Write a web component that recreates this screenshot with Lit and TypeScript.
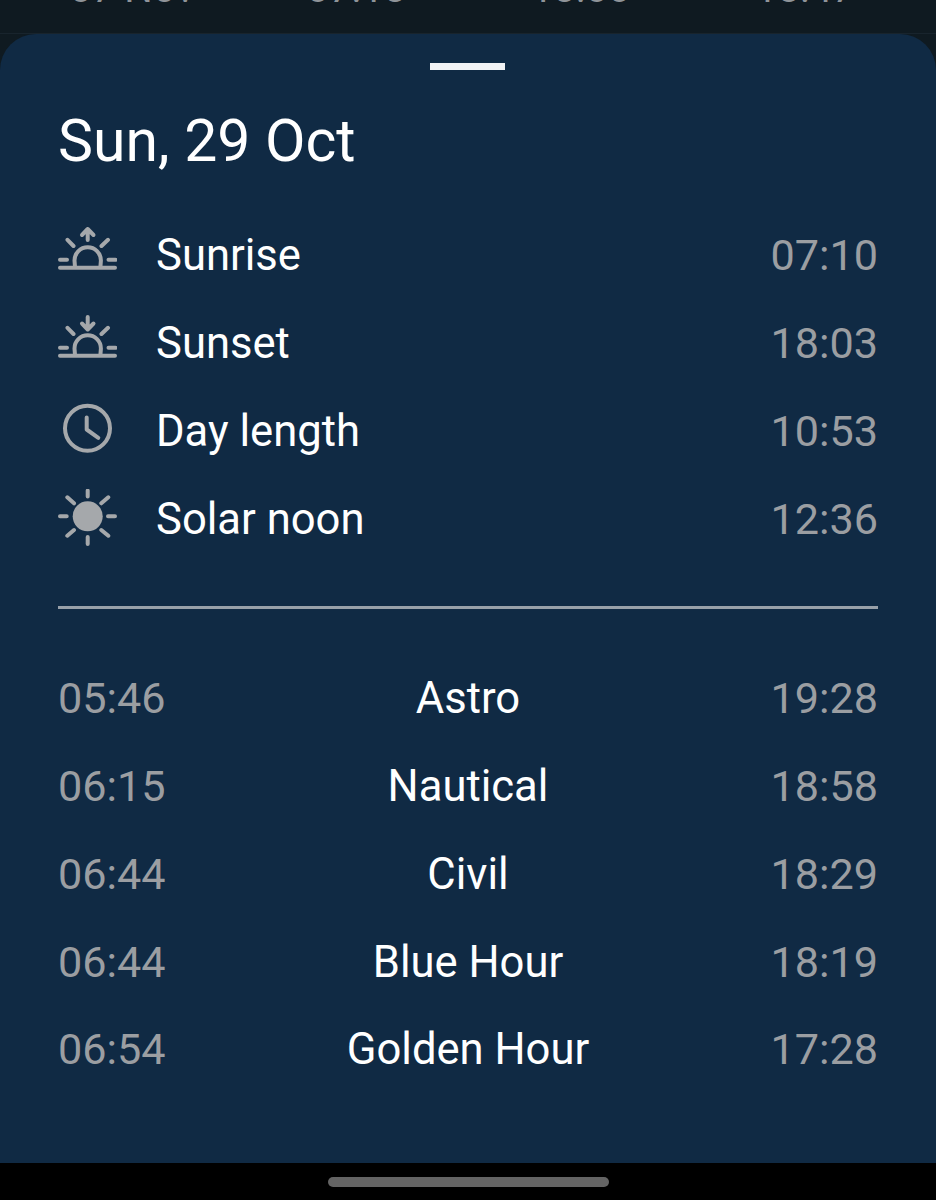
import { LitElement, html, css, svg } from "lit";
import { customElement } from "lit/decorators.js";

const sunBase = svg`<path d="M2 42.800H57M2 34.800H9M50.500 34.800H57.500M9.500 14.800L15.500 21M50 14.800L43.500 21M17 42L16.500 35.500A13.200 13.200 0 0 1 42.900 35.500L42.400 42" />`;
const icons: Record<string, unknown> = {
  rise: svg`${sunBase}<path d="M29.700 15V4M24 10L29.700 4L35.500 10" />`,
  set: svg`${sunBase}<path d="M29.700 4V16M24 10.500L29.700 16.500L35.500 10.500" />`,
  clock: svg`<circle cx="29.500" cy="27.300" r="22.500" /><path d="M28.700 16.500V28.500L40.300 36.800" />`,
  sun: svg`<circle cx="29.700" cy="27.300" r="15" fill="currentColor" stroke="none" /><path d="M29.700 1.600V7.400M29.700 48V55M2 27.300H8.700M50 27.300H57M9.300 8.300L16 14.300M50.300 8.300L43.300 14.300M9.300 46.700L16 41M50.300 46.700L43.300 41" />`,
};

const facts = [
  ["rise", "Sunrise", "07:10"],
  ["set", "Sunset", "18:03"],
  ["clock", "Day length", "10:53"],
  ["sun", "Solar noon", "12:36"],
];
const twilight = [
  ["05:46", "Astro", "19:28"],
  ["06:15", "Nautical", "18:58"],
  ["06:44", "Civil", "18:29"],
  ["06:44", "Blue Hour", "18:19"],
  ["06:54", "Golden Hour", "17:28"],
];

@customElement("app-root")
export class AppRoot extends LitElement {
  static styles = css`
    :host { display: block; width: 936px; height: 1200px; background: #0f1a21; font-family: Roboto, "Liberation Sans", sans-serif; overflow: hidden; }
    .top { height: 34px; box-sizing: border-box; border-bottom: 1px solid #18242d; overflow: hidden; display: grid; grid-template-columns: repeat(4, 1fr); padding: 0 19px 0 20px; color: #8f9499; font-size: 40px; line-height: 48px; }
    .top span { margin-top: -35.500px; text-align: center; }
    .sheet { height: 1129px; box-sizing: border-box; background: #102a44; border-radius: 36px 36px 0 0; padding: 29px 58px 0; color: #fff; }
    .handle { width: 75px; height: 7px; margin: 0 auto; background: #f1f3f5; transform: translateX(-1px); }
    h1 { margin: 33px 0 0 0; font-size: 58.900px; font-weight: 400; line-height: 76px; }
    .facts { margin-top: 32px; }
    .fact { height: 88px; display: flex; align-items: center; font-size: 43.600px; }
    .fact svg { width: 59px; height: 59px; flex: none; fill: none; stroke: currentColor; stroke-width: 4; stroke-linecap: round; stroke-linejoin: round; color: #a5a8ab; margin-right: 39px; margin-top: -2px; }
    .label { flex: 1; }
    .time { color: #9b9ea2; font-size: 43.200px; }
    hr { border: 0; height: 3px; background: #98a0a9; margin: 43px 0 46px; }
    .tw { height: 87.750px; display: grid; grid-template-columns: 1fr auto 1fr; align-items: center; font-size: 43.600px; }
    .tw .time:last-child { text-align: right; }
    .nav { height: 37px; background: #000; display: flex; justify-content: center; padding-top: 14px; box-sizing: border-box; }
    .pill { width: 281px; height: 10px; background: #646464; border-radius: 5px; }
  `;
  render() {
    return html`
      <div class="top"><span>07 Nov</span><span>07:18</span><span>18:00</span><span>18:47</span></div>
      <div class="sheet">
        <div class="handle"></div>
        <h1>Sun, 29 Oct</h1>
        <div class="facts">
          ${facts.map(([i, l, t]) => html`<div class="fact"><svg viewBox="0 0 59 59">${icons[i]}</svg><span class="label">${l}</span><span class="time">${t}</span></div>`)}
        </div>
        <hr />
        ${twilight.map(([a, l, b]) => html`<div class="tw"><span class="time">${a}</span><span>${l}</span><span class="time">${b}</span></div>`)}
      </div>
      <div class="nav"><div class="pill"></div></div>
    `;
  }
}
